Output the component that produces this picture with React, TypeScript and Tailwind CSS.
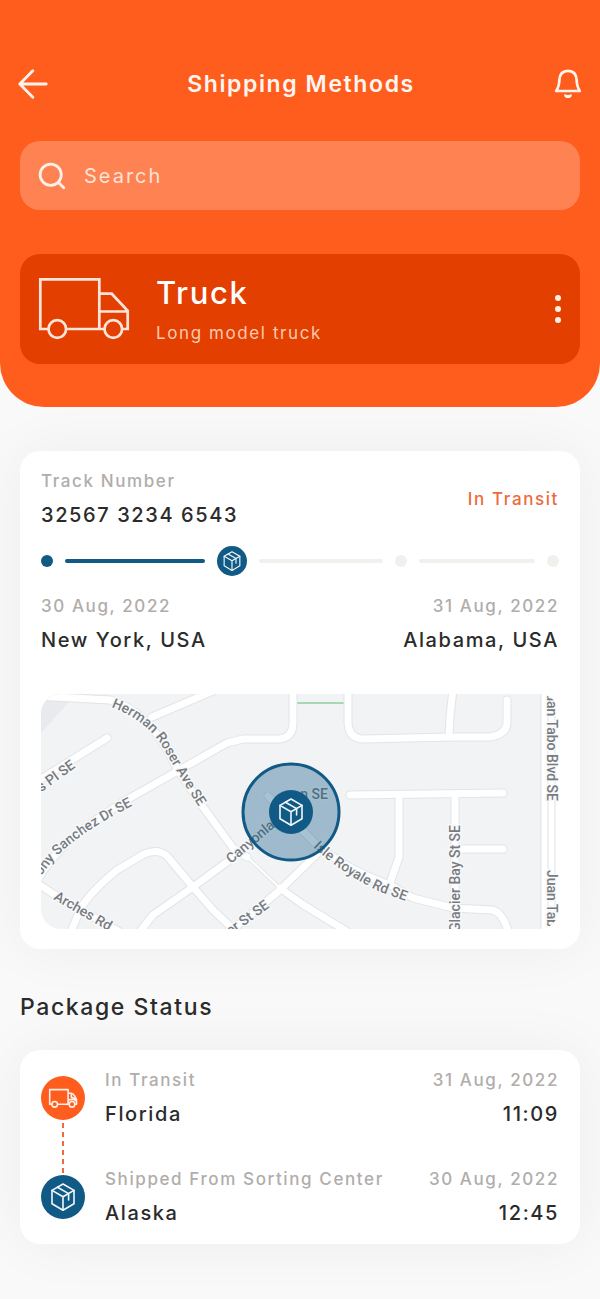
import React from 'react';

const stops = [
    { id: 1, label: 'In Transit', place: 'Florida', date: '31 Aug, 2022', time: '11:09' },
    { id: 2, label: 'Shipped From Sorting Center', place: 'Alaska', date: '30 Aug, 2022', time: '12:45' },
];

// road centre lines on the map
const roads = [
    'M-5 2 L70 6 C100 14 122 42 137 75 L163 113 L193 154 L207 163',
    'M112 23 L180 -6',
    'M-10 92 L67 44',
    'M-4 190 C12 155 50 128 90 104 L187 49 L203 45 L240 45 Q253 43 253 29 L253 -5',
    'M-5 188 L23 206 L80 238',
    'M30 240 L40 216 Q48 200 77 176 L104 160 Q118 154 127 162 L153 193 L173 216 L196 238',
    'M98 240 L113 221 L153 193 L187 168 L237 126',
    'M190 238 L240 196 L277 160',
    'M240 194 L262 210 L308 238',
    'M228 102 L276 150 Q305 175 350 191 L373 204 L413 214 L452 216 Q463 218 469 240',
    'M310 101 L463 99',
    'M359 101 L359 163 L350 189',
    'M415 101 L415 240',
    'M415 155 L463 155',
    'M308 -5 L308 29 Q309 45 324 45 L410 43 L450 43 Q467 40 467 28 L467 6',
    'M413 -5 L410 23 L409 43',
];

function BackIcon() {
    return (
        <svg width="30" height="30" viewBox="0 0 30 30" fill="none" stroke="#fff3ec" strokeWidth="2.8" strokeLinecap="round" strokeLinejoin="round">
            <path d="M28.2 15H2M14.8 1.8L1.8 15 14.8 28.2" />
        </svg>
    );
}

function BellIcon() {
    return (
        <svg width="28" height="30" viewBox="0 0 28 30" fill="none" stroke="#fff3ec" strokeWidth="2.7" strokeLinecap="round" strokeLinejoin="round">
            <path d="M2.2 22C4.6 18.5 5.2 16 5.4 10.8C5.7 5 9 1.8 14 1.8S22.3 5 22.6 10.8C22.8 16 23.4 18.5 25.8 22Z" />
            <path d="M10.8 26q3.2 1.2 6.4 0a3.3 3.2 0 0 1-6.4 0z" fill="#fff3ec" strokeWidth="1.4" />
        </svg>
    );
}

function SearchIcon() {
    return (
        <svg className="shrink-0" width="28" height="28" viewBox="0 0 28 28" fill="none" stroke="#fff0e8" strokeWidth="2.8" strokeLinecap="round">
            <circle cx="12.7" cy="12.7" r="10.6" />
            <path d="M20.4 20.4l5.4 5.4" />
        </svg>
    );
}

function TruckIcon() {
    return (
        <svg width="92" height="64" viewBox="0 0 92 64" fill="none" stroke="#ffe5d9" strokeWidth="2.7">
            <path d="M10.6 52H2.3V2.3h59V52M28 52h38.6M84 52h5.7V33.7l-16-17H61.3M61.3 34.5h28.4" />
            <circle cx="19.3" cy="52" r="8.8" />
            <circle cx="75.3" cy="52" r="8.8" />
        </svg>
    );
}

function SmallTruckIcon() {
    return (
        <svg width="30" height="30" viewBox="0 0 30 30" fill="none" stroke="#fff1ea" strokeWidth="1.6" strokeLinejoin="round">
            <path d="M3.7 21.3H1.7V6.6h18.4v14.7M9.7 21.3H21M27 21.3h1.5v-5l-2.2-3.8c-.8-1.6-1.8-2.3-3.4-2.3h-2.8M23.4 10.4v3.8l4.4 2" />
            <path d="M20.3 17.4c2.4-1.6 6.4-1.4 8 .6" />
            <circle cx="6.7" cy="21.3" r="2.8" />
            <circle cx="24" cy="21.3" r="2.8" />
        </svg>
    );
}

function BoxIcon({ size }) {
    return (
        <svg width={size} height={size} viewBox="0 0 28 28" fill="none" stroke="#f2f8fb" strokeWidth="1.6" strokeLinejoin="round" strokeLinecap="round">
            <path d="M14 1L25 7.4V20.8L14 27.2L3 20.8V7.4Z" />
            <path d="M3 7.4L14 13.8L25 7.4M14 13.8V27.2" />
            <path d="M8.5 4.2L19.6 10.6V17" />
        </svg>
    );
}

function RouteMap() {
    return (
        <svg className="mt-10 block h-[235px] w-full rounded-[20px]" viewBox="1 0 518 235" preserveAspectRatio="xMidYMid slice" role="img" aria-label="Route map">
            <rect width="520" height="235" fill="#f1f3f5" />
            <path d="M0 0H36L0 40Z" fill="#e8eaee" />
            <path d="M253 9H308" stroke="#a5d8b4" strokeWidth="2" />
            <g fill="none" strokeLinecap="round" strokeLinejoin="round">
                <path d="M205 161L240 194" stroke="#e6e7e9" strokeWidth="4" />
                {roads.map((d) => <path key={d} d={d} stroke="#e2e4e6" strokeWidth="9" />)}
                <path d="M205 161L240 194" stroke="#fff" strokeWidth="2" />
                {roads.map((d) => <path key={d} d={d} stroke="#fff" strokeWidth="7" />)}
            </g>
            <rect x="501" width="19" height="235" fill="#fff" />
            <path d="M501 0V235M508 0V235M515 0V235" stroke="#dfe1e4" strokeWidth="1" />
            <defs>
                <path id="herman" d="M71 13C95 22 112 36 122 52C130 66 145 92 170 130" />
                <path id="sanchez" d="M1 182Q8 172 18 161Q45 134 110 103" />
                <path id="isle" d="M273 153Q300 178 338 197L390 216" />
            </defs>
            <g className="font-['Roboto',sans-serif] text-[14px] font-medium tracking-normal" fill="#777b80" stroke="#f8f9fa" strokeWidth="3" strokeLinejoin="round" paintOrder="stroke">
                <text><textPath href="#herman">Herman Roser Ave SE</textPath></text>
                <text><textPath href="#sanchez">ony Sanchez Dr SE</textPath></text>
                <text><textPath href="#isle">Isle Royale Rd SE</textPath></text>
                <text transform="translate(36 73) rotate(-36)" textAnchor="end">s Pl SE</text>
                <text transform="translate(13 205) rotate(30)">Arches Rd</text>
                <text transform="translate(191 170) rotate(-40)">Canyonla</text>
                <text x="288" y="105" textAnchor="end">n SE</text>
                <text transform="translate(230 213) rotate(-36)" textAnchor="end">er St SE</text>
                <text transform="translate(420 131) rotate(-90)" textAnchor="end">Glacier Bay St SE</text>
                <text transform="translate(507 107) rotate(90)" textAnchor="end">Juan Tabo Blvd SE</text>
                <text transform="translate(507 176) rotate(90)">Juan Tabo</text>
            </g>
            <circle cx="251" cy="118" r="48" fill="#105a85" fillOpacity="0.37" stroke="#105a85" strokeWidth="3" />
            <circle cx="251" cy="118" r="22" fill="#105a85" />
            <g transform="translate(237 104)"><BoxIcon size={28} /></g>
        </svg>
    );
}

export default function App() {
    return (
        <div className="min-h-screen bg-[#f9f9f9] pb-14 font-['Inter',sans-serif] tracking-widest text-[#2b2b2b]">
            <header className="rounded-b-[44px] bg-[#ff5d1e] px-5 pt-16 pb-[43px] text-white">
                <div className="-mx-0.5 flex h-10 items-center justify-between">
                    <button type="button" aria-label="Back"><BackIcon /></button>
                    <h1 className="text-[23px] leading-8 font-semibold text-[#fff6f1]">Shipping Methods</h1>
                    <button type="button" aria-label="Notifications"><BellIcon /></button>
                </div>
                <label className="mt-[37px] flex h-[69px] items-center gap-[18px] rounded-[20px] bg-[#ff8253] px-[18px]">
                    <SearchIcon />
                    <input type="search" placeholder="Search" aria-label="Search" className="w-full bg-transparent text-[20px] tracking-widest outline-none placeholder:text-[#ffe3d6]" />
                </label>
                <div className="mt-11 flex h-[110px] items-center gap-[26px] rounded-[20px] bg-[#e23f00] px-[18px]">
                    <TruckIcon />
                    <div className="flex flex-1 flex-col gap-2">
                        <h2 className="text-[31px] leading-10 font-medium">Truck</h2>
                        <p className="text-[17px] leading-6 text-[#ffc8b0]">Long model truck</p>
                    </div>
                    <button type="button" aria-label="More" className="flex flex-col gap-[5px] px-px">
                        <span className="size-[6px] rounded-full bg-[#fff0e8]" />
                        <span className="size-[6px] rounded-full bg-[#fff0e8]" />
                        <span className="size-[6px] rounded-full bg-[#fff0e8]" />
                    </button>
                </div>
            </header>

            <main className="px-5 pt-11">
                <section className="rounded-[20px] bg-white px-[21px] pt-[18px] pb-5 shadow-[0_0_60px_rgba(0,0,0,0.05)]">
                    <div className="flex items-center justify-between">
                        <div className="flex flex-col gap-2">
                            <p className="text-[17px] leading-6 font-medium text-[#b0adab]">Track Number</p>
                            <p className="text-[20px] leading-7 font-medium">32567 3234 6543</p>
                        </div>
                        <p className="text-[17px] leading-6 font-medium text-[#ee6a3c]">In Transit</p>
                    </div>
                    <div className="mt-[17px] flex items-center gap-3">
                        <span className="size-3 rounded-full bg-[#105a85]" />
                        <span className="h-1 flex-[141] rounded-full bg-[#105a85]" />
                        <span className="flex size-[30px] items-center justify-center rounded-full bg-[#105a85]"><BoxIcon size={20} /></span>
                        <span className="h-1 flex-[124] rounded-full bg-[#f0f0ec]" />
                        <span className="size-3 rounded-full bg-[#f0f0ec]" />
                        <span className="h-1 flex-[117] rounded-full bg-[#f0f0ec]" />
                        <span className="size-3 rounded-full bg-[#f0f0ec]" />
                    </div>
                    <div className="mt-[18px] flex justify-between">
                        <div className="flex flex-col gap-2">
                            <p className="text-[17px] leading-6 font-medium text-[#b0adab]">30 Aug, 2022</p>
                            <p className="text-[20px] leading-7 font-medium">New York, USA</p>
                        </div>
                        <div className="flex flex-col gap-2 text-right">
                            <p className="text-[17px] leading-6 font-medium text-[#b0adab]">31 Aug, 2022</p>
                            <p className="text-[20px] leading-7 font-medium">Alabama, USA</p>
                        </div>
                    </div>
                    <RouteMap />
                </section>

                <h2 className="mt-[42px] text-[23px] leading-8 font-medium">Package Status</h2>
                <section className="mt-[27px] flex gap-5 rounded-[20px] bg-white px-[21px] pt-[18px] pb-[17px] shadow-[0_0_60px_rgba(0,0,0,0.05)]">
                    <div className="flex flex-col items-center justify-between py-2">
                        <span className="flex size-11 items-center justify-center rounded-full bg-[#ff5d1e]"><SmallTruckIcon /></span>
                        <svg width="2" height="50" viewBox="0 0 2 50">
                            <path d="M1 0V50" stroke="#ee6a3c" strokeWidth="2" strokeDasharray="5 4" />
                        </svg>
                        <span className="flex size-11 items-center justify-center rounded-full bg-[#105a85]"><BoxIcon size={28} /></span>
                    </div>
                    <ul className="flex flex-1 flex-col gap-[39px]">
                        {stops.map((stop) => (
                            <li key={stop.id} className="flex justify-between">
                                <div className="flex flex-col gap-2">
                                    <p className="text-[17px] leading-6 font-medium text-[#b0adab]">{stop.label}</p>
                                    <p className="text-[20px] leading-7 font-medium">{stop.place}</p>
                                </div>
                                <div className="flex flex-col gap-2 text-right">
                                    <p className="text-[17px] leading-6 font-medium text-[#b0adab]">{stop.date}</p>
                                    <p className="text-[20px] leading-7 font-medium">{stop.time}</p>
                                </div>
                            </li>
                        ))}
                    </ul>
                </section>
            </main>
        </div>
    );
}
